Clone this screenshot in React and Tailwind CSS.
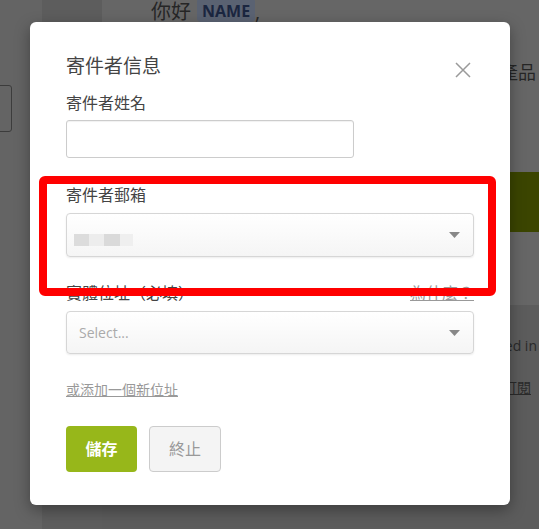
function Caret() {
  return (
    <svg width="11" height="6" viewBox="0 0 11 6" className="shrink-0">
      <polygon points="0,0 11,0 5.5,6" fill="#888888" />
    </svg>
  )
}

function CloseIcon() {
  return (
    <svg width="16" height="16" viewBox="0 0 16 16">
      <path d="M1 1 L15 15 M15 1 L1 15" stroke="#9a9a9a" strokeWidth="1.5" fill="none" />
    </svg>
  )
}

function Backdrop() {
  return (
    <div className="flex h-full">
      <div className="w-[42px] shrink-0 bg-[#646464] pt-[85px]">
        <div className="-ml-[22px] h-[47px] w-[34px] rounded-[3px] border border-[#3c3c3c]" />
      </div>
      <div className="w-[60px] shrink-0 bg-[#5d5d5d]" />
      <div className="flex min-w-0 flex-1 flex-col">
        <div className="h-[305px] bg-[#666666]">
          <div className="flex items-start pl-[49px] text-[#262626]">
            <span className="text-[20px] leading-[24px]">你好</span>
            <span className="-mt-[2px] ml-[6px] h-[24px] rounded-[4px] bg-[#5a6272] px-[5px] pt-[1px] text-[16px] leading-[24px] font-bold text-[#1b2640]">
              NAME
            </span>
            <span className="text-[20px] leading-[24px]">,</span>
          </div>
          <div className="mt-[36px] pl-[398px] text-[18px] leading-[24px] whitespace-nowrap text-[#262626]">
            產品
          </div>
          <div className="mt-[88px] ml-[330px] h-[60px] bg-[#3b4500]" />
        </div>
        <div className="flex-1 bg-[#5c5c5c] text-[14px] text-[#2a2a2a]">
          <div className="mt-[31px] flex justify-end pr-[2px] leading-[20px] whitespace-nowrap">Signed in</div>
          <div className="mt-[22px] flex justify-end pr-[8px] leading-[20px]">
            <span className="underline">訂閱</span>
          </div>
        </div>
      </div>
    </div>
  )
}

function Modal() {
  return (
    <div className="absolute left-[30px] top-[22px] h-[483px] w-[480px] rounded-[6px] bg-white px-[36px] pt-[32px] text-[#444444] shadow-[0_5px_15px_rgba(0,0,0,0.35)]">
      <button className="absolute right-[39px] top-[40px]">
        <CloseIcon />
      </button>

      <h2 className="text-[19px] leading-[24px] font-normal">寄件者信息</h2>

      <div className="mt-[14px] text-[16px] leading-[22px]">寄件者姓名</div>
      <div className="mt-[6px] h-[38px] w-[288px] rounded-[3px] border border-[#cccccc] bg-white shadow-[inset_0_1px_1px_rgba(0,0,0,0.06)]" />

      <div className="mt-[26px] text-[16px] leading-[22px]">寄件者郵箱</div>
      <div className="mt-[7px] flex h-[44px] items-center justify-between rounded-[4px] border border-[#d6d6d6] bg-gradient-to-b from-white to-[#f5f5f5] pr-[13px] pl-[7px] shadow-[0_1px_2px_rgba(0,0,0,0.08)]">
        <div className="mt-[10px] flex">
          <div className="h-[12px] w-[15px] bg-[#dcdcdc]" />
          <div className="h-[12px] w-[15px] bg-[#ededed]" />
          <div className="h-[12px] w-[16px] bg-[#dadada]" />
          <div className="h-[12px] w-[13px] bg-[#efefef]" />
        </div>
        <Caret />
      </div>

      <div className="mt-[25px] flex justify-between text-[16px] leading-[22px]">
        <span>實體位址（必填）</span>
        <span className="text-[#999999] underline">為什麼？</span>
      </div>
      <div className="mt-[7px] flex h-[43px] items-center justify-between rounded-[4px] border border-[#d6d6d6] bg-gradient-to-b from-white to-[#f5f5f5] pr-[13px] pl-[12px] shadow-[0_1px_2px_rgba(0,0,0,0.08)]">
        <span className="text-[14px] text-[#aaaaaa]">Select...</span>
        <Caret />
      </div>

      <div className="mt-[26px] text-[14px] leading-[20px]">
        <span className="text-[#999999] underline">或添加一個新位址</span>
      </div>

      <div className="mt-[26px] flex gap-[12px]">
        <button className="h-[46px] w-[71px] rounded-[4px] bg-[#97b71a] text-[16px] font-bold text-white">儲存</button>
        <button className="h-[46px] w-[72px] rounded-[4px] border border-[#cccccc] bg-[#f4f4f4] text-[16px] text-[#999999]">終止</button>
      </div>
    </div>
  )
}

export default function App() {
  return (
    <div className="relative h-[529px] w-[539px] overflow-hidden bg-[#666666] font-['Open_Sans','Noto_Sans_CJK_TC',sans-serif]">
      <Backdrop />
      <Modal />
      <div className="absolute left-[39px] top-[176px] h-[120px] w-[457px] rounded-[6px] border-[8px] border-[#ff0000]" />
    </div>
  )
}
